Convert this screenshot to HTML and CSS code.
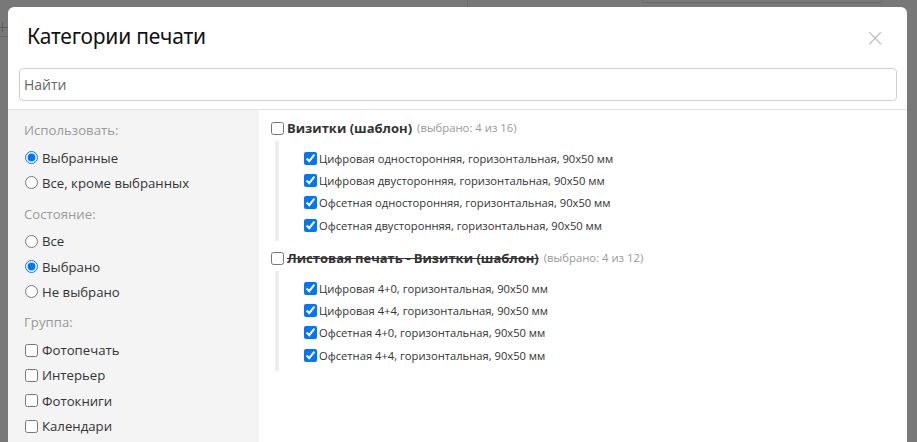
FILE: index.html
```html
<!DOCTYPE html>
<html lang="ru">
<head>
<meta charset="utf-8">
<title>Категории печати</title>
<link rel="stylesheet" href="styles.css">
</head>
<body>
<div class="backdrop">
  <div class="bg-plus"></div>
  <div class="bg-hline"></div>
  <div class="bg-line"></div>
  <div class="bg-box"></div>
</div>
<div class="modal">
  <div class="modal-header">
    <h1 class="modal-title">Категории печати</h1>
    <span class="close">&times;</span>
  </div>
  <div class="search-wrap">
    <input class="search" type="text" placeholder="Найти">
  </div>
  <div class="modal-body">
    <aside class="sidebar">
      <div class="side-label">Использовать:</div>
      <label class="opt"><input type="radio" name="use" checked> Выбранные</label>
      <label class="opt"><input type="radio" name="use"> Все, кроме выбранных</label>
      <div class="side-label">Состояние:</div>
      <label class="opt"><input type="radio" name="st"> Все</label>
      <label class="opt"><input type="radio" name="st" checked> Выбрано</label>
      <label class="opt"><input type="radio" name="st"> Не выбрано</label>
      <div class="side-label">Группа:</div>
      <label class="opt"><input type="checkbox"> Фотопечать</label>
      <label class="opt"><input type="checkbox"> Интерьер</label>
      <label class="opt"><input type="checkbox"> Фотокниги</label>
      <label class="opt"><input type="checkbox"> Календари</label>
    </aside>
    <main class="content">
      <section class="group">
        <label class="group-head"><input type="checkbox"> <b class="group-name">Визитки (шаблон)</b> <span class="count">(выбрано: 4 из 16)</span></label>
        <div class="items">
          <label class="item"><input type="checkbox" checked>Цифровая односторонняя, горизонтальная, 90x50 мм</label>
          <label class="item"><input type="checkbox" checked>Цифровая двусторонняя, горизонтальная, 90x50 мм</label>
          <label class="item"><input type="checkbox" checked>Офсетная односторонняя, горизонтальная, 90x50 мм</label>
          <label class="item"><input type="checkbox" checked>Офсетная двусторонняя, горизонтальная, 90x50 мм</label>
        </div>
      </section>
      <section class="group">
        <label class="group-head"><input type="checkbox"> <b class="group-name strike">Листовая печать - Визитки (шаблон)</b> <span class="count">(выбрано: 4 из 12)</span></label>
        <div class="items">
          <label class="item"><input type="checkbox" checked>Цифровая 4+0, горизонтальная, 90x50 мм</label>
          <label class="item"><input type="checkbox" checked>Цифровая 4+4, горизонтальная, 90x50 мм</label>
          <label class="item"><input type="checkbox" checked>Офсетная 4+0, горизонтальная, 90x50 мм</label>
          <label class="item"><input type="checkbox" checked>Офсетная 4+4, горизонтальная, 90x50 мм</label>
        </div>
      </section>
    </main>
  </div>
</div>
</body>
</html>
```

FILE: styles.css
```css
html, body {
  margin: 0;
  padding: 0;
  height: 100%;
  overflow: hidden;
}
body {
  background: #787878;
  font-family: "Open Sans", "Noto Sans", sans-serif;
  color: #333;
}
.backdrop {
  position: absolute;
  inset: 0;
}
.bg-plus {
  position: absolute;
  left: -2px;
  top: 22px;
  width: 10px;
  height: 10px;
}
.bg-plus::before,
.bg-plus::after {
  content: "";
  position: absolute;
  background: #5f5f5f;
}
.bg-plus::before {
  left: 4px;
  top: 0;
  width: 1px;
  height: 10px;
}
.bg-plus::after {
  left: 0;
  top: 5px;
  width: 10px;
  height: 1px;
}
.bg-hline {
  position: absolute;
  left: 0;
  top: 36px;
  width: 8px;
  height: 1px;
  background: #6a6a6a;
}
.bg-line {
  position: absolute;
  left: 467px;
  top: 0;
  width: 1px;
  height: 7px;
  background: #6c6c6c;
}
.bg-box {
  position: absolute;
  left: 641px;
  top: -4px;
  width: 240px;
  height: 5px;
  border: 1px solid #6a6a6a;
  border-radius: 3px;
}
.modal {
  position: absolute;
  left: 8px;
  top: 7px;
  width: 899px;
  height: 460px;
  background: #fff;
  border-radius: 6px;
  overflow: hidden;
}
.modal-header {
  display: flex;
  align-items: center;
  justify-content: space-between;
  padding: 12px 22px 0 19px;
  height: 34px;
}
.modal-title {
  margin: 0;
  font-family: "Noto Sans", sans-serif;
  font-weight: 400;
  font-size: 21px;
  line-height: 28px;
  color: #111;
  letter-spacing: -0.2px;
}
.close {
  font-size: 24px;
  line-height: 1;
  color: #c0c0c0;
  font-weight: 300;
  font-family: "DejaVu Sans", sans-serif;
  margin-top: 4px;
}
.search-wrap {
  padding: 15px 10px 8px 11px;
  border-bottom: 1px solid #e2e2e2;
}
.search {
  display: block;
  box-sizing: border-box;
  width: 100%;
  height: 33px;
  border: 1px solid #cfcfcf;
  border-radius: 4px;
  padding: 0 4px;
  font-family: "Open Sans", sans-serif;
  font-size: 14px;
  outline: none;
}
.search::placeholder {
  color: #666;
}
.modal-body {
  display: flex;
  align-items: stretch;
  min-height: 340px;
}
.sidebar {
  width: 251px;
  flex: none;
  background: #f4f4f4;
  padding: 10px 0 0 16px;
  box-sizing: border-box;
  display: flex;
  flex-direction: column;
  font-size: 13.2px;
}
.side-label {
  color: #9a9a9a;
  line-height: 20px;
  margin-bottom: 5px;
}
.opt {
  display: flex;
  align-items: center;
  line-height: 20px;
  height: 25.3px;
  color: #333;
}
.opt + .side-label {
  margin-top: 8px;
}
.opt input {
  margin: 0 4px 0 1px;
  width: 13px;
  height: 13px;
  accent-color: #0075ff;
}
.content {
  flex: 1;
  padding: 9px 0 0 12px;
}
.group {
  margin-bottom: 8px;
}
.group-head {
  display: flex;
  align-items: center;
  font-size: 13px;
  line-height: 18px;
}
.group-head input {
  margin: 0 3px 0 0;
  width: 13px;
  height: 13px;
}
.group-name {
  font-weight: 700;
  color: #333;
  margin-right: 5px;
}
.strike {
  text-decoration: line-through;
}
.count {
  color: #999;
  font-size: 11.3px;
}
.items {
  margin: 4px 0 0 4px;
  border-left: 4px solid #eeeeee;
  padding: 6px 0 5px 25px;
  display: flex;
  flex-direction: column;
}
.item {
  display: flex;
  align-items: center;
  font-size: 11.2px;
  height: 22.3px;
  color: #333;
}
.item input {
  margin: 0 2px 0 0;
  width: 13px;
  height: 13px;
  accent-color: #0075ff;
}
```
